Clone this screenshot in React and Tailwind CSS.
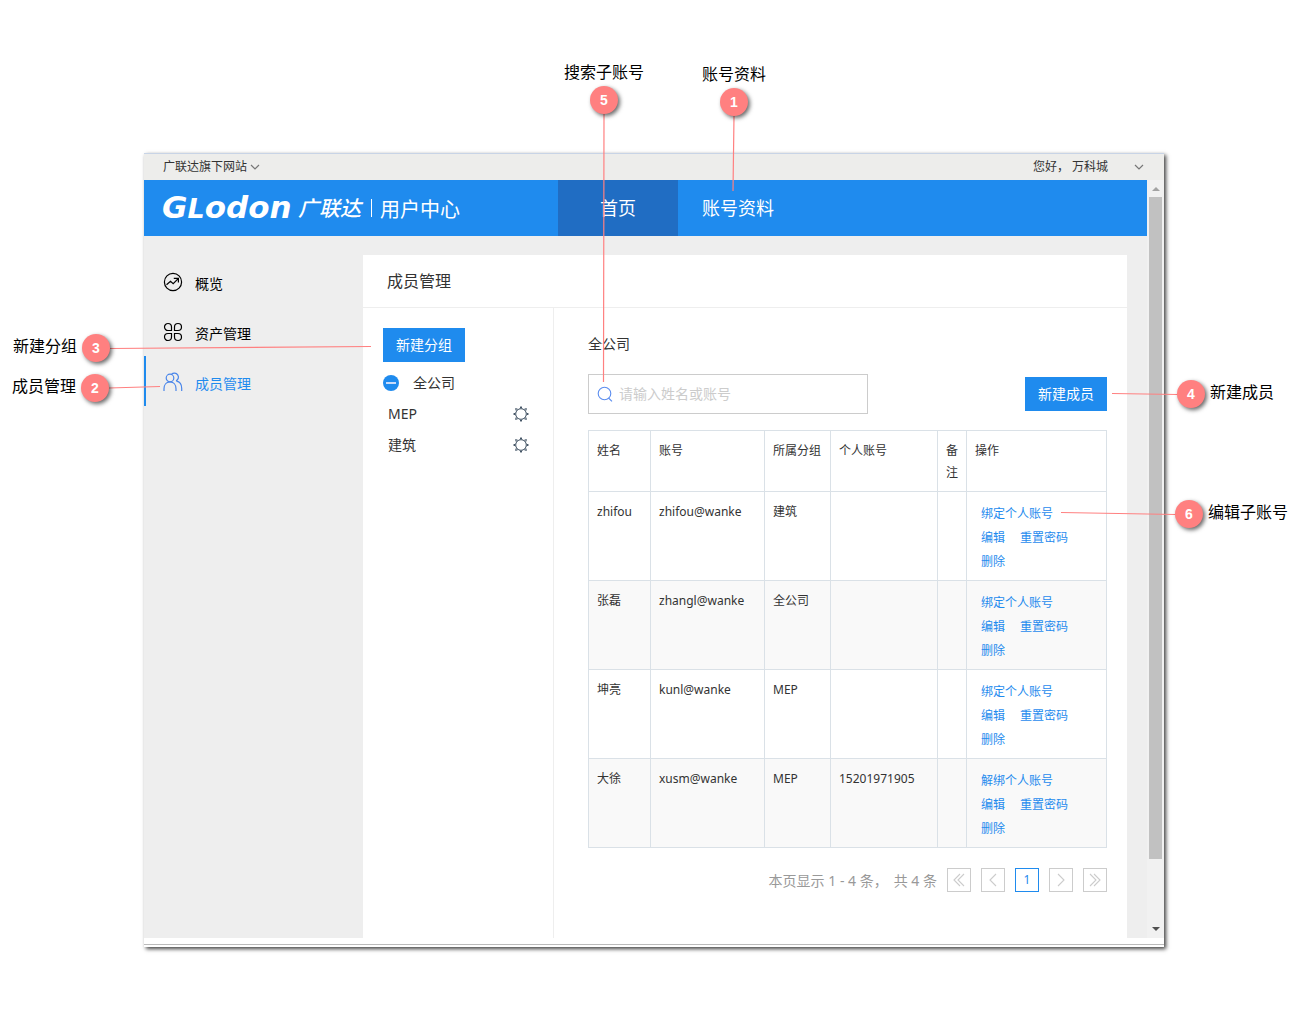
import { useState } from "react";

const members = [
  { name: "zhifou", account: "zhifou@wanke", group: "建筑", personal: "", bind: "绑定个人账号" },
  { name: "张磊", account: "zhangl@wanke", group: "全公司", personal: "", bind: "绑定个人账号" },
  { name: "坤亮", account: "kunl@wanke", group: "MEP", personal: "", bind: "绑定个人账号" },
  { name: "大徐", account: "xusm@wanke", group: "MEP", personal: "15201971905", bind: "解绑个人账号" },
];

const groups = ["MEP", "建筑"];

function Chevron({ className }) {
  return (
    <svg className={className} width="10" height="6" viewBox="0 0 10 6" fill="none" stroke="#777" strokeWidth="1.2">
      <path d="M1 1l4 4 4-4" />
    </svg>
  );
}

function OverviewIcon() {
  return (
    <svg width="20" height="20" viewBox="0 0 20 20" fill="none" stroke="currentColor" strokeWidth="1.2">
      <circle cx="10" cy="10" r="8.6" />
      <path d="M3.5 12.800l4-3.600 2.700 2.400 5-5M10.800 6.300h4.600v4.200" />
    </svg>
  );
}

function AssetsIcon() {
  return (
    <svg width="20" height="20" viewBox="0 0 20 20" fill="none" stroke="currentColor" strokeWidth="1.2">
      <path d="M8.500 8.500H5a3.500 3.500 0 1 1 3.500-3.500zM11.500 8.500V5A3.500 3.500 0 1 1 15 8.500zM5 11.500H8.500V15A3.500 3.500 0 1 1 5 11.500zM11.500 11.500H15a3.500 3.500 0 1 1-3.500 3.500z" />
    </svg>
  );
}

function MembersIcon() {
  return (
    <svg width="20" height="20" viewBox="0 0 20 20" fill="none" stroke="#4a86ea" strokeWidth="1.2">
      <circle cx="7" cy="6" r="3.800" />
      <path d="M8.500 2.400a4 4 0 1 1 4.500 6.400M1 19v-2.200c0-4 2.400-7 6-7s6 3 6 7V19M13.400 9.200c3.300.500 5.300 3.700 5.300 7.400V19" />
    </svg>
  );
}

function GearIcon() {
  return (
    <svg width="16" height="16" viewBox="0 0 16 16" fill="none" stroke="currentColor" strokeWidth="1">
      <circle cx="8" cy="8" r="5.300" />
      <path d="M7 2.500L8 .5l1 2M7 13.500l1 2 1-2M2.500 7l-2 1 2 1M13.500 7l2 1-2 1M3.300 4.800l-.7-2.200 2.200.700M12.700 4.800l.700-2.200-2.200.700M3.300 11.200l-.700 2.200 2.200-.700M12.700 11.200l.700 2.200-2.200-.700" />
    </svg>
  );
}

function SearchIcon() {
  return (
    <svg className="text-[#5b8def]" width="16" height="16" viewBox="0 0 16 16" fill="none" stroke="currentColor" strokeWidth="1.1">
      <circle cx="7.500" cy="7.500" r="6.300" />
      <path d="M11.500 12l3.500 3.400" />
    </svg>
  );
}

function Logo() {
  return (
    <div className="flex items-center text-white">
      <span className="w-[136px] font-['DejaVu_Sans'] text-[31px] leading-8 font-bold italic">
        G<span className="text-[27px]">L</span>odon
      </span>
      <span className="w-[66px] text-[21px] font-medium italic">广联达</span>
      <span className="mr-2 ml-[7px] h-[18px] w-px bg-white" />
      <span className="pt-1 text-[20px] leading-6">用户中心</span>
    </div>
  );
}

const navItems = [
  { label: "概览", Icon: OverviewIcon },
  { label: "资产管理", Icon: AssetsIcon },
  { label: "成员管理", Icon: MembersIcon },
];

function Sidebar() {
  const [active, setActive] = useState("成员管理");
  return (
    <nav className="w-[219px] shrink-0 pt-5">
      {navItems.map(({ label, Icon }) => (
        <a
          key={label}
          href="#"
          onClick={() => setActive(label)}
          className={
            active === label
              ? "flex h-[50px] items-center gap-3 border-l-2 border-[#1f8bee] pt-0.5 pl-[17px] text-sm text-[#1f8bee]"
              : "flex h-[50px] items-center gap-3 border-l-2 border-transparent pt-0.5 pl-[17px] text-sm text-black"
          }
        >
          <Icon />
          <span className="pt-1">{label}</span>
        </a>
      ))}
    </nav>
  );
}

function GroupPanel() {
  return (
    <section className="w-[190px] shrink-0 px-5 pt-5 text-sm">
      <button className="h-[34px] w-[82px] bg-[#1f8bee] text-white">新建分组</button>
      <div className="mt-1.5 flex h-[30px] items-center gap-[14px]">
        <button aria-label="收起" className="flex size-4 items-center justify-center rounded-full bg-[#1f8bee]">
          <span className="h-0.5 w-2.5 bg-[#c9dcfb]" />
        </button>
        <span>全公司</span>
      </div>
      {groups.map((group) => (
        <div key={group} className="flex h-[31px] items-center justify-between pr-1 pl-[5px]">
          <span>{group}</span>
          <button aria-label={"设置 " + group} className="text-[#456]">
            <GearIcon />
          </button>
        </div>
      ))}
    </section>
  );
}

function MemberTable() {
  const head = "border border-[#dae1e7] px-2 pt-[9px] pb-[7px] text-left align-top font-normal";
  const cell = "border border-[#dae1e7] px-2 pt-[9px] pb-[7px] align-top";
  return (
    <table className="mt-4 w-full table-fixed border-collapse text-xs leading-[22px]">
      <colgroup>
        <col className="w-[62px]" />
        <col className="w-[114px]" />
        <col className="w-[66px]" />
        <col className="w-[107px]" />
        <col className="w-[29px]" />
        <col />
      </colgroup>
      <thead>
        <tr>
          <th className={head}>姓名</th>
          <th className={head}>账号</th>
          <th className={head}>所属分组</th>
          <th className={head}>个人账号</th>
          <th className={head}>备注</th>
          <th className={head}>操作</th>
        </tr>
      </thead>
      <tbody>
        {members.map((m) => (
          <tr key={m.account} className="even:bg-[#f9f9f9]">
            <td className={cell}>{m.name}</td>
            <td className={cell}>{m.account}</td>
            <td className={cell}>{m.group}</td>
            <td className={cell}>{m.personal}</td>
            <td className={cell}></td>
            <td className="border border-[#dae1e7] px-2 pt-2.5 pb-1.5 align-top">
              <div className="pl-1.5 leading-6 text-[#1f8bee]">
                <a href="#" className="block">{m.bind}</a>
                <div className="flex gap-[15px]">
                  <a href="#">编辑</a>
                  <a href="#">重置密码</a>
                </div>
                <a href="#" className="block">删除</a>
              </div>
            </td>
          </tr>
        ))}
      </tbody>
    </table>
  );
}

function PageButton({ label, path }) {
  return (
    <button aria-label={label} className="flex size-6 items-center justify-center border border-[#ccc] text-[#ccc]">
      <svg width="14" height="14" viewBox="0 0 14 14" fill="none" stroke="currentColor" strokeWidth="1.1">
        <path d={path} />
      </svg>
    </button>
  );
}

function Pagination() {
  return (
    <div className="mt-5 flex items-center justify-end gap-2.5 text-sm text-[#999]">
      <span className="flex gap-1.5 pt-px">
        <span>本页显示 1 - 4 条，</span>
        <span>共 4 条</span>
      </span>
      <PageButton label="第一页" path="M8 1L2 7l6 6M12 1L6 7l6 6" />
      <PageButton label="上一页" path="M10 1L4 7l6 6" />
      <button className="size-6 border border-[#1f8bee] text-xs text-[#1f8bee]">1</button>
      <PageButton label="下一页" path="M4 1l6 6-6 6" />
      <PageButton label="最后一页" path="M2 1l6 6-6 6M6 1l6 6-6 6" />
    </div>
  );
}

function MemberPanel() {
  return (
    <section className="min-w-0 flex-1 border-l border-[#eee] pt-6 pr-5 pl-[34px]">
      <h2 className="text-sm leading-6">全公司</h2>
      <div className="mt-[18px] flex items-center justify-between">
        <label className="flex h-10 w-[280px] items-center gap-[6px] border border-[#ccc] px-2">
          <SearchIcon />
          <input
            type="text"
            aria-label="搜索成员"
            placeholder="请输入姓名或账号"
            className="min-w-0 flex-1 text-sm outline-none placeholder:text-[#ccc]"
          />
        </label>
        <button className="h-[34px] w-[82px] bg-[#1f8bee] text-sm text-white">新建成员</button>
      </div>
      <MemberTable />
      <Pagination />
    </section>
  );
}

function Scrollbar() {
  return (
    <div className="flex w-[17px] shrink-0 flex-col items-center bg-[#f1f1f1]">
      <span className="flex h-[17px] items-center">
        <span className="border-x-4 border-b-4 border-x-transparent border-b-[#a3a3a3]" />
      </span>
      <span className="mr-px h-[662px] w-[13px] bg-[#c1c1c1]" />
      <span className="mt-auto flex h-[18px] items-center">
        <span className="border-x-4 border-t-4 border-x-transparent border-t-[#505050]" />
      </span>
    </div>
  );
}

function BrowserWindow() {
  return (
    <div className="mr-[149px] ml-[144px] bg-white text-[#333] shadow-[2px_2px_4px_rgba(0,0,0,0.75)]">
      <div className="flex h-[27px] items-center justify-between border-t border-[#c8d4e6] bg-[#ededeb] pr-5 pl-[19px] text-xs">
        <button className="flex items-center gap-[3px]">
          广联达旗下网站
          <Chevron />
        </button>
        <button className="flex items-center">
          您好， 万科城
          <Chevron className="ml-[26px]" />
        </button>
      </div>
      <div className="flex">
        <div className="flex min-w-0 flex-1 flex-col bg-[#eee]">
          <header className="flex h-14 items-center bg-[#1f8bee] text-lg text-white">
            <div className="w-[414px] shrink-0 pl-[18px]">
              <Logo />
            </div>
            <a href="#" className="flex h-full w-[120px] items-center justify-center bg-[#206dc3]">首页</a>
            <a href="#" className="flex h-full w-[120px] items-center justify-center">账号资料</a>
          </header>
          <div className="flex">
            <Sidebar />
            <main className="mt-[19px] mr-5 min-w-0 flex-1 bg-white">
              <h1 className="h-[53px] border-b border-[#eee] px-6 text-base leading-[52px]">成员管理</h1>
              <div className="flex min-h-[630px]">
                <GroupPanel />
                <MemberPanel />
              </div>
            </main>
          </div>
        </div>
        <Scrollbar />
      </div>
      <div className="h-[9px] border-b-2 border-white bg-white">
        <div className="h-[7px] border-b border-[#bbb]" />
      </div>
    </div>
  );
}

function Badge({ children }) {
  return (
    <span className="flex size-7 shrink-0 items-center justify-center rounded-full bg-[#ff8080] font-['Liberation_Sans'] text-sm font-bold text-white shadow-[2px_2px_4px_rgba(0,0,0,0.6)]">
      {children}
    </span>
  );
}

// numbered notes around the window
function Callouts() {
  return (
    <div className="pointer-events-none absolute inset-0 text-base leading-6 text-black">
      <svg className="absolute top-0 left-0 overflow-visible" width="740" height="400" stroke="#ff8080" strokeWidth="1.2">
        <path d="M604 114L603.500 382M734 116L733 191M110 348.500L371 346.500M109 388L160 386.500" />
      </svg>
      <svg className="absolute top-0 right-0 overflow-visible" width="260" height="530" stroke="#ff8080" strokeWidth="1.2">
        <path d="M59 393.500L125 394.500M8 512.500L123 514.500" />
      </svg>
      <div className="absolute top-[60px] left-[564px] flex flex-col items-center gap-0.5">
        <span>搜索子账号</span>
        <Badge>5</Badge>
      </div>
      <div className="absolute top-[62px] left-[702px] flex flex-col items-center gap-0.5">
        <span>账号资料</span>
        <Badge>1</Badge>
      </div>
      <div className="absolute top-[334px] left-[13px] flex gap-[5px]">
        <span>新建分组</span>
        <Badge>3</Badge>
      </div>
      <div className="absolute top-[374px] left-[12px] flex gap-[5px]">
        <span>成员管理</span>
        <Badge>2</Badge>
      </div>
      <div className="absolute top-[380px] right-[39px] flex gap-[5px]">
        <Badge>4</Badge>
        <span>新建成员</span>
      </div>
      <div className="absolute top-[500px] right-[25px] flex gap-[5px]">
        <Badge>6</Badge>
        <span>编辑子账号</span>
      </div>
    </div>
  );
}

export default function App() {
  return (
    <div className="relative min-h-screen bg-white pt-[153px] pb-20 font-['Noto_Sans','Noto_Sans_CJK_SC',sans-serif]">
      <BrowserWindow />
      <Callouts />
    </div>
  );
}
